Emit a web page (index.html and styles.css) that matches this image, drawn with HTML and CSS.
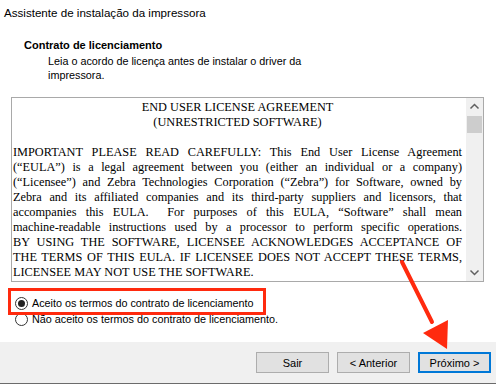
FILE: index.html
```html
<!DOCTYPE html>
<html lang="pt">
<head>
  <meta charset="UTF-8">
  <title>Assistente de instalação da impressora</title>
  <link rel="stylesheet" href="styles.css">
</head>
<body>
  <div class="window">
    <div class="title">Assistente de instalação da impressora</div>

    <div class="header">
      <h1>Contrato de licenciamento</h1>
      <p>Leia o acordo de licença antes de instalar o driver da<br>impressora.</p>
    </div>

    <div class="license">
      <div class="doc">
        <span class="line center">END USER LICENSE AGREEMENT</span>
        <span class="line center">(UNRESTRICTED SOFTWARE)</span>
        <span class="line">&nbsp;</span>
        <span class="line just">IMPORTANT PLEASE READ CAREFULLY: This End User License Agreement</span>
        <span class="line just">(“EULA”) is a legal agreement between you (either an individual or a company)</span>
        <span class="line just">(“Licensee”) and Zebra Technologies Corporation (“Zebra”) for Software, owned by</span>
        <span class="line just">Zebra and its affiliated companies and its third-party suppliers and licensors, that</span>
        <span class="line just">accompanies this EULA.&nbsp; For purposes of this EULA, “Software” shall mean</span>
        <span class="line just">machine-readable instructions used by a processor to perform specific operations.</span>
        <span class="line just">BY USING THE SOFTWARE, LICENSEE ACKNOWLEDGES ACCEPTANCE OF</span>
        <span class="line just">THE TERMS OF THIS EULA. IF LICENSEE DOES NOT ACCEPT THESE TERMS,</span>
        <span class="line">LICENSEE MAY NOT USE THE SOFTWARE.</span>
      </div>
      <div class="scrollbar">
        <svg class="arrow-btn" width="17" height="17" viewBox="0 0 17 17"><path d="M4.5 10.5 L8.5 6.5 L12.5 10.5" fill="none" stroke="#606060" stroke-width="1.5"/></svg>
        <div class="thumb"></div>
        <div class="track"></div>
        <svg class="arrow-btn" width="17" height="17" viewBox="0 0 17 17"><path d="M4.5 6.5 L8.5 10.5 L12.5 6.5" fill="none" stroke="#606060" stroke-width="1.5"/></svg>
      </div>
    </div>

    <div class="options">
      <label class="opt"><span class="radio checked"></span>Aceito os termos do contrato de licenciamento</label>
      <label class="opt"><span class="radio"></span>Não aceito os termos do contrato de licenciamento.</label>
    </div>

    <div class="footer">
      <button class="btn">Sair</button>
      <button class="btn">&lt; Anterior</button>
      <button class="btn primary">Próximo &gt;</button>
    </div>

    <div class="highlight"></div>
    <svg class="pointer" width="496" height="384" viewBox="0 0 496 384">
      <line x1="402" y1="262" x2="432" y2="322" stroke="#ff2a0e" stroke-width="4" stroke-linecap="round"/>
      <polygon points="423,333 448,320 447,349" fill="#ff2a0e"/>
    </svg>
  </div>
</body>
</html>
```
FILE: styles.css
```css
body {
  margin: 0;
  padding: 0;
  font-family: "Liberation Sans", Arial, sans-serif;
  color: #000;
  background: #fff;
}

.window {
  position: relative;
  width: 496px;
  height: 384px;
  overflow: hidden;
  background: #fff;
  display: flex;
  flex-direction: column;
}

.title {
  padding: 5px 0 0 4px;
  font-size: 11.6px;
  line-height: 16px;
}

.header {
  padding-left: 24px;
  margin-top: 17px;
}

.header h1 {
  margin: 0;
  font-size: 11px;
  font-weight: bold;
  line-height: 14px;
}

.header p {
  margin: 2px 0 0 24px;
  font-size: 10.8px;
  line-height: 14px;
}

.license {
  margin: 15px 0 0 11px;
  width: 471px;
  height: 183px;
  border: 1px solid #a9a9a9;
  display: flex;
}

.doc {
  flex: 1;
  padding: 2px 4px 0 1px;
  font-family: "Liberation Serif", "Times New Roman", serif;
  font-size: 12.3px;
  line-height: 15px;
  overflow: hidden;
}

.line {
  display: block;
  white-space: nowrap;
}

.line.center {
  text-align: center;
}

.line.just {
  text-align: justify;
  text-align-last: justify;
  white-space: normal;
}

.scrollbar {
  width: 17px;
  background: #f0f0f0;
  display: flex;
  flex-direction: column;
}

.arrow-btn {
  display: block;
}

.thumb {
  height: 17px;
  margin: 1px 1px 0;
  background: #cdcdcd;
}

.track {
  flex: 1;
}

.options {
  padding: 15px 0 0 15px;
  display: flex;
  flex-direction: column;
  gap: 2px;
}

.opt {
  display: flex;
  align-items: center;
  font-size: 10.8px;
  line-height: 13px;
  height: 13px;
  margin-bottom: 1px;
}

.radio {
  width: 11px;
  height: 11px;
  border: 1px solid #333;
  border-radius: 50%;
  margin-right: 4px;
  background: #fff;
  display: flex;
  align-items: center;
  justify-content: center;
}

.radio.checked::after {
  content: "";
  width: 7px;
  height: 7px;
  border-radius: 50%;
  background: #222;
}

.footer {
  margin-top: auto;
  height: 42px;
  background: #f0f0f0;
  border-bottom: 1px solid #6b6b6b;
  display: flex;
  justify-content: flex-end;
  align-items: flex-start;
  padding: 10px 5px 0 0;
  box-sizing: border-box;
  gap: 8px;
}

.btn {
  width: 73px;
  height: 21px;
  background: #e1e1e1;
  border: 1px solid #adadad;
  font-family: "Liberation Sans", Arial, sans-serif;
  font-size: 11px;
  color: #000;
  padding: 0;
}

.btn.primary {
  border: 2px solid #0078d7;
}

.highlight {
  position: absolute;
  left: 8px;
  top: 288px;
  width: 252px;
  height: 21px;
  border: 3px solid #ff2a0e;
}

.pointer {
  position: absolute;
  left: 0;
  top: 0;
  pointer-events: none;
}
```
